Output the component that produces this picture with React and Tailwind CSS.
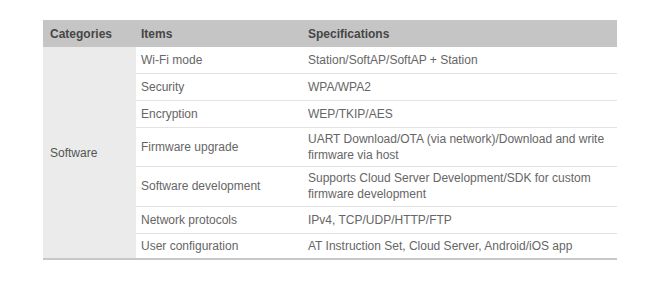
const rows = [
  { item: 'Wi-Fi mode', spec: 'Station/SoftAP/SoftAP + Station', h: 'h-[26px]' },
  { item: 'Security', spec: 'WPA/WPA2', h: 'h-[27px]' },
  { item: 'Encryption', spec: 'WEP/TKIP/AES', h: 'h-[27px]' },
  {
    item: 'Firmware upgrade',
    spec: 'UART Download/OTA (via network)/Download and write firmware via host',
    h: 'h-[39px]',
  },
  {
    item: 'Software development',
    spec: 'Supports Cloud Server Development/SDK for custom firmware development',
    h: 'h-[40px]',
  },
  { item: 'Network protocols', spec: 'IPv4, TCP/UDP/HTTP/FTP', h: 'h-[27px]' },
  { item: 'User configuration', spec: 'AT Instruction Set, Cloud Server, Android/iOS app', h: 'h-[26px]' },
];

export default function App() {
  return (
    <div className="min-h-[293px] w-[661px] bg-white pt-[20px] pl-[43px] font-['Liberation_Sans',Arial,sans-serif]">
      <table className="w-[574px] table-fixed border-collapse text-[12px] leading-[16px]">
        <colgroup>
          <col className="w-[93px]" />
          <col className="w-[165px]" />
          <col className="w-[316px]" />
        </colgroup>
        <thead>
          <tr className="h-[27px] bg-[#c5c5c5] text-left font-bold text-[#464646]">
            <th className="pl-[7px] font-bold">Categories</th>
            <th className="pl-[5px] font-bold">Items</th>
            <th className="pl-[7px] font-bold">Specifications</th>
          </tr>
        </thead>
        <tbody className="text-[#666]">
          {rows.map((row, i) => (
            <tr key={row.item} className={row.h}>
              {i === 0 ? (
                <td rowSpan={rows.length} className="border-b-2 border-[#c8c8c8] bg-[#ebebeb] pl-[7px] text-[#555]">
                  Software
                </td>
              ) : null}
              <td
                className={
                  i === rows.length - 1
                    ? 'border-b-2 border-[#c8c8c8] pl-[5px] align-middle'
                    : 'border-b border-[#e2e2e2] pl-[5px] align-middle'
                }
              >
                {row.item}
              </td>
              <td
                className={
                  i === rows.length - 1
                    ? 'border-b-2 border-[#c8c8c8] pl-[7px] pr-[8px] align-middle'
                    : 'border-b border-[#e2e2e2] pl-[7px] pr-[8px] align-middle'
                }
              >
                {row.spec}
              </td>
            </tr>
          ))}
        </tbody>
      </table>
    </div>
  );
}
